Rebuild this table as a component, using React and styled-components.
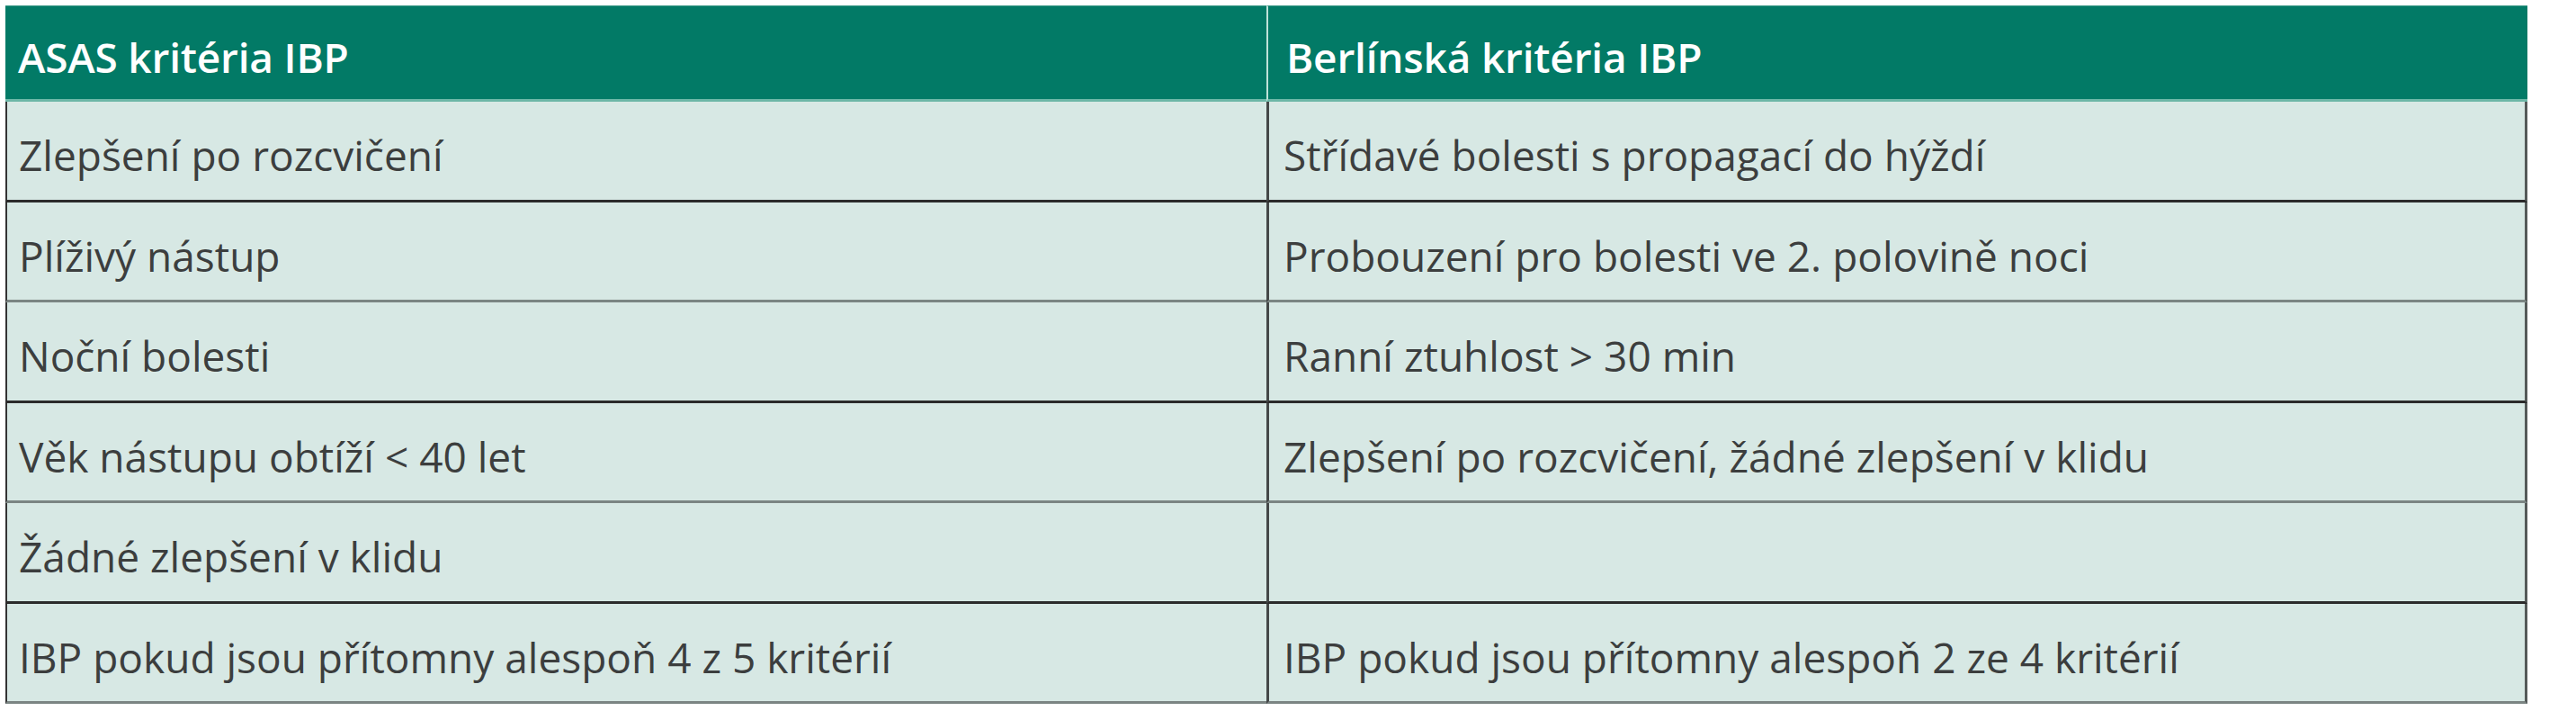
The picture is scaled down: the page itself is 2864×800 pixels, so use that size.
import React from "react";
import styled, { createGlobalStyle } from "styled-components";

const GlobalStyle = createGlobalStyle`
  html, body {
    margin: 0;
    padding: 0;
    background: #ffffff;
  }
  body {
    font-family: "Open Sans", "Noto Sans", sans-serif;
  }
`;

const Page = styled.div`
  padding: 6px 0 0 6px;
`;

const Grid = styled.div`
  display: grid;
  grid-template-columns: 1402px 1402px;
  width: 2804px;
`;

const HeadCell = styled.div`
  box-sizing: border-box;
  height: 107px;
  display: flex;
  align-items: center;
  padding-left: ${({ $first }) => ($first ? "14px" : "20px")};
  padding-top: 8px;
  background-color: #027a66;
  border-top: 1px solid #3f9a88;
  border-bottom: 3px solid #6cb7a7;
  border-left: ${({ $first }) => ($first ? "none" : "2px solid #bfe2d9")};
  color: #ffffff;
  font-size: 46px;
  font-weight: 600;
  letter-spacing: -0.2px;
`;

const Cell = styled.div`
  box-sizing: border-box;
  height: 111.5px;
  display: flex;
  align-items: center;
  padding-left: ${({ $first }) => ($first ? "13px" : "16px")};
  padding-top: 10px;
  background-color: #d7e8e4;
  color: #3c3e3e;
  font-size: 46px;
  border-bottom: 3px solid ${({ $dark }) => ($dark ? "#2b2b2b" : "#7b8583")};
  border-left: ${({ $first }) => ($first ? "2px solid #333333" : "3px solid #444848")};
  border-right: ${({ $first }) => ($first ? "none" : "3px solid #555a59")};
`;

const rows = [
  ["Zlepšení po rozcvičení", "Střídavé bolesti s propagací do hýždí"],
  ["Plíživý nástup", "Probouzení pro bolesti ve 2. polovině noci"],
  ["Noční bolesti", "Ranní ztuhlost > 30 min"],
  ["Věk nástupu obtíží < 40 let", "Zlepšení po rozcvičení, žádné zlepšení v klidu"],
  ["Žádné zlepšení v klidu", ""],
  ["IBP pokud jsou přítomny alespoň 4 z 5 kritérií", "IBP pokud jsou přítomny alespoň 2 ze 4 kritérií"],
];

const App = () => {
  return (
    <Page>
      <GlobalStyle />
      <Grid>
        <HeadCell $first>ASAS kritéria IBP</HeadCell>
        <HeadCell>Berlínská kritéria IBP</HeadCell>
        {rows.map(([left, right], i) => (
          <React.Fragment key={i}>
            <Cell $first $dark={i % 2 === 0}>{left}</Cell>
            <Cell $dark={i % 2 === 0}>{right}</Cell>
          </React.Fragment>
        ))}
      </Grid>
    </Page>
  );
};

export default App;
